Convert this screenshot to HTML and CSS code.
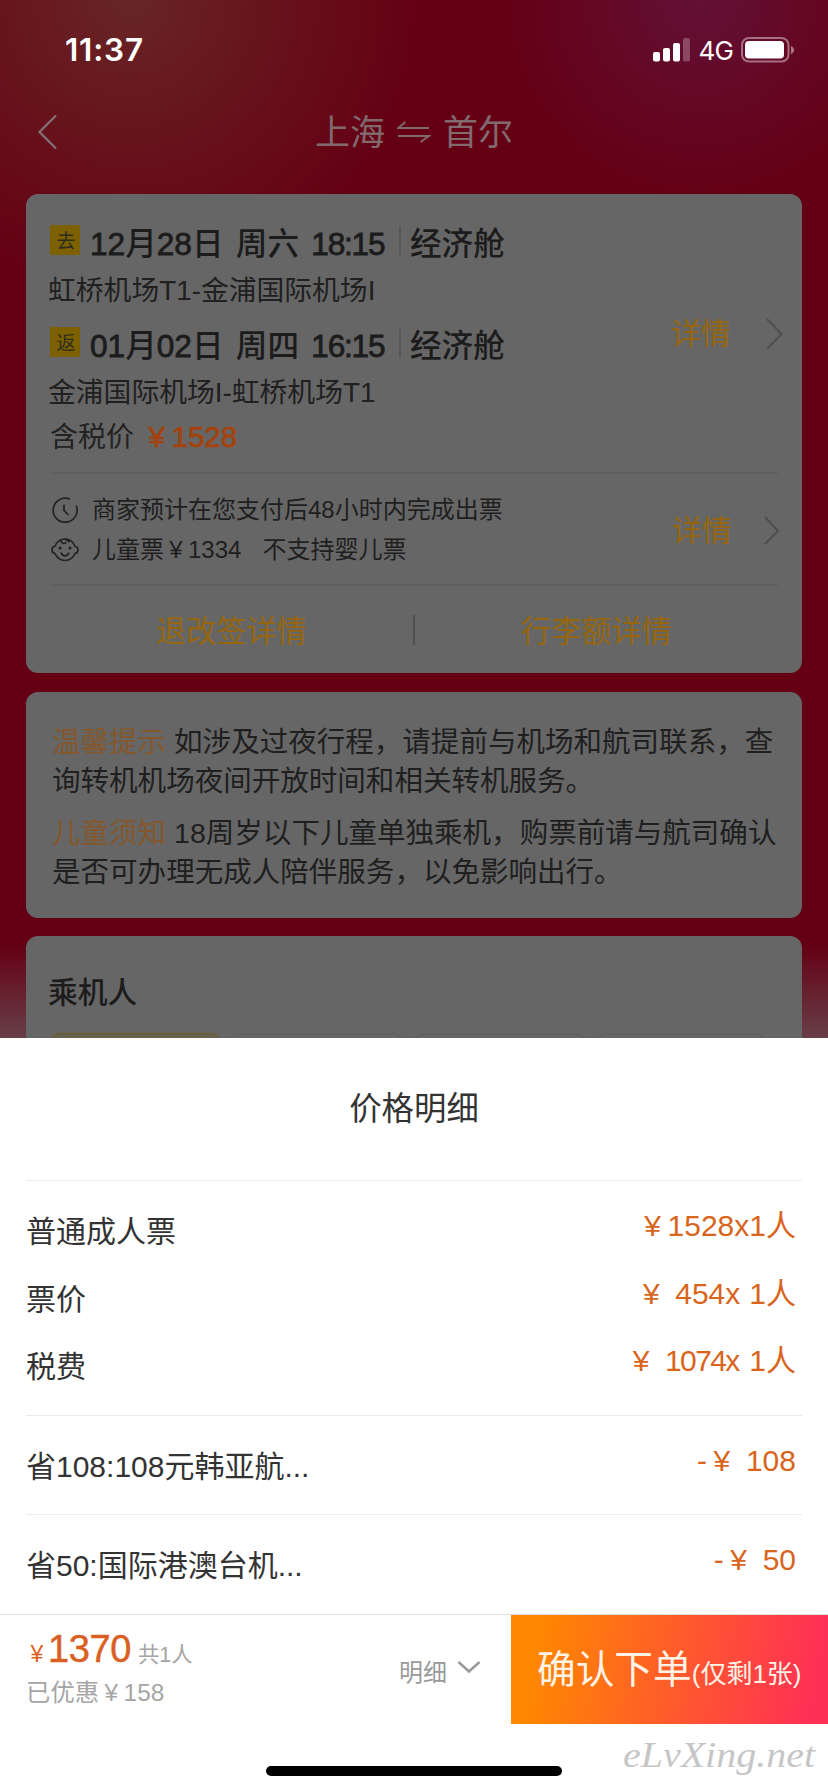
FILE: index.html
```html
<!DOCTYPE html>
<html lang="zh-CN">
<head>
<meta charset="utf-8">
<title>价格明细</title>
<link rel="stylesheet" href="styles.css">
</head>
<body>
<div class="screen">
  <div class="status">
    <span class="clock">11:37</span>
    <span class="status-icons">
      <svg class="signal" width="38" height="24" viewBox="0 0 38 24"><g fill="#fff"><rect x="0" y="14" width="7" height="9.5" rx="2"/><rect x="10" y="10" width="7" height="13.5" rx="2"/><rect x="20" y="5" width="7" height="18.5" rx="2"/><rect x="30" y="0" width="7" height="23.5" rx="2" opacity=".25"/></g></svg>
      <span class="net">4G</span>
      <svg class="battery" width="54" height="26" viewBox="0 0 54 26"><rect x="1" y="1" width="46.500" height="23.500" rx="7" fill="none" stroke="#fff" stroke-opacity=".42" stroke-width="2"/><rect x="4" y="4" width="39" height="17.500" rx="4" fill="#fff"/><path d="M50 9c4 1.500 4 6.500 0 8z" fill="#fff" opacity=".45"/></svg>
    </span>
  </div>
  <div class="nav">
    <svg class="back" width="22" height="36" viewBox="0 0 22 36"><path d="M19 1.500 2.500 18 19 34.500"/></svg>
    <div class="route"><span>上海</span><svg width="34" height="22" viewBox="0 0 34 22"><path d="M8.500 1 1 7h31M1 15h31l-8.500 6"/></svg><span>首尔</span></div>
  </div>

  <div class="card flight">
    <div class="legs">
      <div class="leg-list">
        <div class="leg"><i class="tag">去</i><b class="when"><u>12</u>月<u>28</u>日 周六 <u class="time">18:15</u></b><i class="bar"></i><b>经济舱</b></div>
        <div class="airport">虹桥机场T1-金浦国际机场I</div>
        <div class="leg second"><i class="tag">返</i><b class="when"><u>01</u>月<u>02</u>日 周四 <u class="time">16:15</u></b><i class="bar"></i><b>经济舱</b></div>
        <div class="airport">金浦国际机场I-虹桥机场T1</div>
        <div class="total">含税价<span class="amount"><i class="yen">¥</i>1528</span></div>
      </div>
      <div class="more">详情<svg width="20" height="34" viewBox="0 0 20 34"><path d="M2 2l14.500 15L2 32"/></svg></div>
    </div>
    <div class="notes">
      <div class="note-list">
        <div class="note"><svg width="28" height="28" viewBox="0 0 28 28"><path d="M19 3.200A12 12 0 1 0 25.200 9.500M13 8.500v6l4.500 4.500"/></svg>商家预计在您支付后48小时内完成出票</div>
        <div class="note child"><svg width="28" height="28" viewBox="0 0 28 28"><path d="M4 10.500C6 5 10 3 14 3s8 2 10 7.500c4 0 4 6.500 0 7C22 22 18 24.500 14 24.500S6 22 4 17.500c-4-.5-4-7 0-7M9.500 4.500c1 3 4.500 4 5.500 1.500M14.500 3l4 3M10 16.500c1.500 4.500 6.500 4.500 8 0"/><circle cx="9" cy="12" r=".7"/><circle cx="19" cy="12" r=".7"/></svg>儿童票<i class="yen">¥</i>1334<span class="infant">不支持婴儿票</span></div>
      </div>
      <div class="more small">详情<svg width="20" height="32" viewBox="0 0 20 32"><path d="M2 2l13 14L2 29"/></svg></div>
    </div>
    <div class="links"><span>退改签详情</span><i></i><span>行李额详情</span></div>
  </div>

  <div class="card tips">
    <p><em>温馨提示</em> 如涉及过夜行程，请提前与机场和航司联系，查<br>询转机机场夜间开放时间和相关转机服务。</p>
    <p><em>儿童须知</em> 18周岁以下儿童单独乘机，购票前请与航司确认<br>是否可办理无成人陪伴服务，以免影响出行。</p>
  </div>

  <div class="card people">
    <h2>乘机人</h2>
    <div class="slots"><i class="on"></i><i></i><i></i><i></i></div>
  </div>

  <div class="sheet">
    <h1>价格明细</h1>
    <div class="group fares">
      <div class="row"><span>普通成人票</span><span class="val"><i class="yen">¥</i>1528x1人</span></div>
      <div class="row"><span>票价</span><span class="val"><i class="yen">¥</i><i class="sp"></i>454x<i class="sp"></i>1人</span></div>
      <div class="row"><span>税费</span><span class="val"><i class="yen">¥</i><i class="sp"></i><i class="tight">1074</i>x<i class="sp"></i>1人</span></div>
    </div>
    <div class="group"><div class="row"><span>省108:108元韩亚航...</span><span class="val">-<i class="yen">¥</i><i class="sp"></i>108</span></div></div>
    <div class="group"><div class="row"><span>省50:国际港澳台机...</span><span class="val">-<i class="yen">¥</i><i class="sp"></i>50</span></div></div>
  </div>

  <div class="footer">
    <div class="sum">
      <div class="pay"><i class="cny">¥</i><strong>1370</strong><span>共1人</span></div>
      <div class="saved">已优惠<i class="yen">¥</i>158</div>
    </div>
    <div class="toggle">明细<svg width="24" height="14" viewBox="0 0 24 14"><path d="M1.500 2 12 11.500 22.500 2"/></svg></div>
    <div class="submit"><span class="big">确认下单</span><span class="left">(仅剩1张)</span></div>
  </div>
  <div class="bottom">
    <div class="home"></div>
    <svg class="mark" width="207" height="60" viewBox="0 0 207 60"><text x="4" y="36" textLength="192" lengthAdjust="spacingAndGlyphs">eLvXing.net</text></svg>
  </div>
</div>
</body>
</html>
```
FILE: styles.css
```css
* { box-sizing: border-box; margin: 0; padding: 0; }
i, em { font-style: normal; }
svg { flex: none; fill: none; }
body { width: 828px; height: 1792px; overflow: hidden; background: #fff; }
.screen {
  width: 828px; height: 1792px; display: flex; flex-direction: column;
  font-family: "Liberation Sans", "Noto Sans CJK SC", sans-serif;
  color: #1c1c1c;
  background:
    radial-gradient(circle 290px at 130px 0, rgba(104,42,40,.9), rgba(104,34,34,.6) 45%, rgba(101,0,20,0)),
    radial-gradient(circle 200px at 700px 0, rgba(98,20,62,.8), rgba(101,0,20,0)),
    linear-gradient(#650014 0, #650014 945px, #673f48 1038px, #fff 1038px);
}
.yen { display: inline-block; width: 1em; text-align: center; }

.status { height: 100px; display: flex; justify-content: space-between; align-items: center; padding: 0 33px 0 65px; color: #fff; }
.clock { font: 600 31.500px/40px Inter, sans-serif; letter-spacing: .8px; }
.status-icons { display: flex; align-items: center; }
.net { font: 400 26px/30px Inter, sans-serif; margin: 1px 8px 0 7px; letter-spacing: -.8px; }

.nav { height: 94px; display: grid; grid-template-columns: 60px 1fr 60px; align-items: start; padding-top: 14px; }
.back { margin-left: 37px; stroke: #867074; stroke-width: 2.2; }
.route { display: flex; justify-content: center; align-items: center; gap: 12px; height: 38px; font-size: 35px; line-height: 38px; color: #806a6e; }
.route svg { stroke: #806a6e; stroke-width: 1.8; margin-top: -2px; }

.card { margin: 0 26px; background: #666; border-radius: 12px; flex: none; }
.flight { height: 479px; padding: 0 24px; }
.legs, .notes { display: flex; justify-content: space-between; border-bottom: 2px solid #5f5f5f; }
.legs { height: 280px; padding-top: 26px; }
.leg { height: 48px; display: flex; align-items: center; font-size: 31.6px; line-height: 48px; }
.leg.second { margin-top: 8px; }
.leg b { font-weight: 500; white-space: nowrap; }
.leg u { text-decoration: none; -webkit-text-stroke: .8px #1c1c1c; }
.leg .time { letter-spacing: -1.2px; }
.leg .when { width: 292px; margin-left: 10px; white-space: pre; word-spacing: 3.500px; }
.tag { width: 30px; height: 30px; margin-top: -8px; background: #7d6100; font-size: 19px; line-height: 34px; text-align: center; padding-left: 2px; color: #2d2d1c; }
.bar { width: 2px; height: 28px; margin: -6px 9px 0 17px; background: #565656; }
.airport { height: 46px; font-size: 27.8px; line-height: 46px; margin-left: -2px; white-space: nowrap; color: #202020; }
.total { height: 42px; font-size: 28px; line-height: 41px; color: #222; }
.amount { color: #a3420c; font-size: 29.500px; margin-left: 8px; -webkit-text-stroke: .7px #a3420c; }
.more { display: flex; align-items: center; height: 34px; gap: 34px; font-size: 30px; line-height: 34px; color: #96660e; margin: 97px -7px 0 0; }
.more svg { stroke: #4f4f4f; stroke-width: 2; }
.notes { height: 112px; padding-top: 15px; }
.note { display: flex; align-items: center; height: 41px; font-size: 24px; line-height: 41px; white-space: nowrap; color: #1f1f1f; }
.note.child { height: 39px; line-height: 39px; }
.note svg { margin: 0 13px 0 1px; stroke: #222; stroke-width: 1.7; }
.infant { margin-left: 21px; }
.more.small { margin: 25px -5px 0 0; gap: 31px; }
.more.small svg { margin-top: -1px; }
.links { height: 87px; display: grid; grid-template-columns: 1fr 2px 1fr; align-items: center; text-align: center; font-size: 30.2px; padding-top: 4px; color: #96660e; line-height: 40px; }
.links i { height: 30px; background: #4f4f4f; margin-top: -3px; }

.tips { height: 226px; margin-top: 19px; padding: 31px 0 0 26px; font-size: 28.54px; line-height: 39px; color: #1f1f1f; white-space: nowrap; }
.tips p + p { margin-top: 13px; }
.tips em { color: #84572c; }

.people { height: 102px; margin-top: 18px; padding: 37px 24px 0; border-radius: 12px 12px 0 0; overflow: hidden; }
.people h2 { font-size: 29.800px; line-height: 40px; font-weight: 500; margin-left: -2px; }
.slots { display: flex; gap: 11px; margin-top: 20px; }
.slots i { width: 171px; height: 60px; flex: none; border: 2px solid #606060; border-radius: 10px; }
.slots .on { border: 1.500px solid #6f5b20; background: #66624f; }

.sheet { background: #fff; height: 576px; padding: 0 26px; color: #333; flex: none; }
.sheet h1 { height: 142px; font-size: 32.400px; font-weight: 400; line-height: 142px; text-align: center; }
.group { height: 99px; border-top: 1px solid #ececec; padding-top: 17px; }
.group.fares { height: 235px; }
.row { display: flex; justify-content: space-between; height: 67.500px; padding: 0 6px 0 0; font-size: 30px; line-height: 67px; white-space: nowrap; }
.val { color: #d9651d; line-height: 55px; }
.sp { display: inline-block; width: 9px; }
.tight { letter-spacing: -1.600px; }

.footer { display: flex; height: 110px; border-top: 1px solid #dedede; background: #fff; flex: none; }
.sum { flex: 1; padding: 17px 0 0 27px; color: #a5a5a5; }
.pay { display: flex; align-items: baseline; height: 42px; line-height: 34px; }
.pay .cny { font-size: 23px; color: #dc5f1e; width: 20px; text-align: center; margin-right: 1px; }
.pay strong { font-weight: 400; font-size: 38px; color: #d95f22; letter-spacing: -.4px; -webkit-text-stroke: .5px #d95f22; }
.pay span { font-size: 21.400px; margin-left: 7px; }
.saved { font-size: 24.400px; line-height: 38px; margin-left: -1px; }
.toggle { display: flex; align-items: center; gap: 10px; margin-right: 30px; padding-top: 2px; font-size: 24px; color: #999; }
.toggle svg { stroke: #999; stroke-width: 2.5; margin-top: -7px; }
.submit { width: 317px; padding-left: 26px; display: flex; align-items: baseline; color: #fff3e6; line-height: 110px; background: linear-gradient(100deg, #ff8800 8%, #ff3055 94%); white-space: nowrap; }
.big { font-size: 38.700px; }
.left { font-size: 26px; }
.bottom { position: relative; flex: 1; background: #fff; }
.home { width: 296px; height: 10px; margin: 42px auto 0; border-radius: 5px; background: #000; }
.mark { position: absolute; left: 619px; top: 7px; }
.mark text { font: italic 36px "Brush Script MT", "Liberation Serif", cursive; fill: #c6c6c6; }
```
